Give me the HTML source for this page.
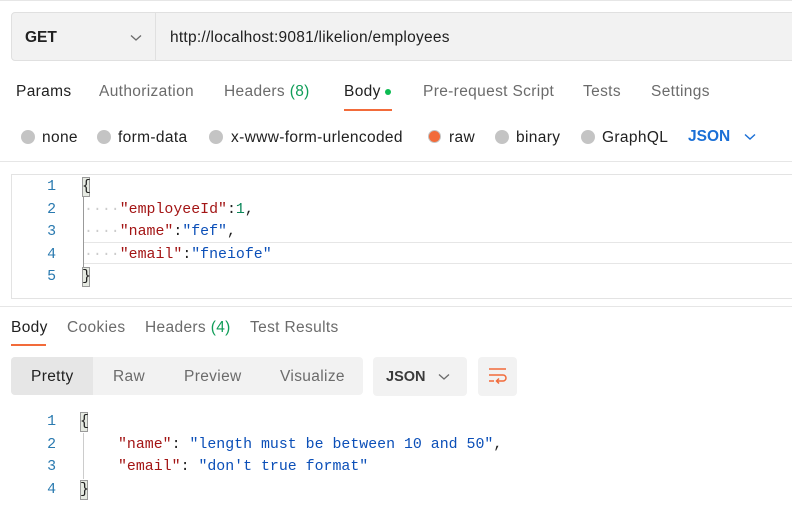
<!DOCTYPE html>
<html><head><style>
body{margin:0;width:792px;height:520px;background:#fff;position:relative;overflow:hidden;font-family:"Liberation Sans",sans-serif;color:#212121}
.a{position:absolute;white-space:nowrap}
.t{font-size:15.5px;letter-spacing:.35px;color:#6b6b6b}
.m{font-family:"Liberation Mono",monospace;font-size:14.9px}
.ln{color:#2a7ab0;width:20px;text-align:right}
.k{color:#a31515}.s{color:#0b4fb8}.n{color:#098658}
.r{width:14px;height:14px;border-radius:50%;background:#c4c4c4}
.br{width:8px;height:20px;background:#e6eae2;border:1px solid #9a9a9a;box-sizing:border-box}
</style></head><body>
<div class="a" style="left:0;top:0;width:792px;height:1px;background:#e6e6e6"></div>
<div class="a" style="left:11px;top:12px;width:790px;height:49px;background:#f2f2f2;border:1px solid #e0e0e0;border-radius:4px;box-sizing:border-box"></div>
<div class="a" style="left:155px;top:13px;width:1px;height:47px;background:#e0e0e0"></div>
<div class="a" style="left:25px;top:29px;font-size:15.5px;font-weight:bold;color:#212121">GET</div>
<svg class="a" style="left:130px;top:34px" width="12" height="8"><path d="M1 1.5l5 4.5 5-4.5" fill="none" stroke="#6b6b6b" stroke-width="1.3"/></svg>
<div class="a" style="left:170px;top:29px;font-size:15.5px;letter-spacing:.25px;color:#212121">http://localhost:9081/likelion/employees</div>

<div class="a t" style="left:16px;top:83px;color:#212121">Params</div>
<div class="a t" style="left:99px;top:83px">Authorization</div>
<div class="a t" style="left:224px;top:83px">Headers <span style="color:#0f9d58">(8)</span></div>
<div class="a t" style="left:344px;top:83px;color:#212121">Body</div>
<div class="a" style="left:385px;top:89px;width:6px;height:6px;border-radius:50%;background:#0cbb52"></div>
<div class="a" style="left:344px;top:109px;width:48px;height:2px;background:#f26b3a"></div>
<div class="a t" style="left:423px;top:83px">Pre-request Script</div>
<div class="a t" style="left:583px;top:83px">Tests</div>
<div class="a t" style="left:651px;top:83px">Settings</div>

<div class="a r" style="left:21px;top:130px"></div><div class="a t" style="left:42px;top:129px;color:#212121">none</div>
<div class="a r" style="left:97px;top:130px"></div><div class="a t" style="left:118px;top:129px;color:#212121">form-data</div>
<div class="a r" style="left:209px;top:130px"></div><div class="a t" style="left:231px;top:129px;color:#212121">x-www-form-urlencoded</div>
<div class="a r" style="left:428px;top:130px;background:#f26b3a;border:1.5px solid #c4c4c4;width:11px;height:11px"></div><div class="a t" style="left:449px;top:129px;color:#212121">raw</div>
<div class="a r" style="left:495px;top:130px"></div><div class="a t" style="left:516px;top:129px;color:#212121">binary</div>
<div class="a r" style="left:581px;top:130px"></div><div class="a t" style="left:602px;top:129px;color:#212121">GraphQL</div>
<div class="a" style="left:688px;top:128px;font-size:15.5px;font-weight:bold;color:#1a6fd6">JSON</div>
<svg class="a" style="left:744px;top:133px" width="12" height="8"><path d="M1 1.5l5 4.5 5-4.5" fill="none" stroke="#1a6fd6" stroke-width="1.4"/></svg>

<div class="a" style="left:0;top:161px;width:792px;height:1px;background:#e6e6e6"></div>
<div class="a" style="left:11px;top:174px;width:790px;height:125px;border:1px solid #e3e3e3;box-sizing:border-box"></div>
<div class="a" style="left:83px;top:197px;width:1px;height:70px;background:#9a9a9a"></div>
<div class="a" style="left:84px;top:242px;width:708px;height:22px;border-top:1px solid #e6e6e6;border-bottom:1px solid #e6e6e6;box-sizing:border-box"></div>
<div class="a m ln" style="left:36px;top:179px">1</div>
<div class="a m ln" style="left:36px;top:202px">2</div>
<div class="a m ln" style="left:36px;top:224px">3</div>
<div class="a m ln" style="left:36px;top:247px">4</div>
<div class="a m ln" style="left:36px;top:269px">5</div>
<div class="a br" style="left:82px;top:177px"></div><div class="a m" style="left:82px;top:179px">{</div>
<div class="a m" style="left:84px;top:202px"><span style="color:#ccc">····</span><span class="k">"employeeId"</span>:<span class="n">1</span>,</div>
<div class="a m" style="left:84px;top:224px"><span style="color:#ccc">····</span><span class="k">"name"</span>:<span class="s">"fef"</span>,</div>
<div class="a m" style="left:84px;top:247px"><span style="color:#ccc">····</span><span class="k">"email"</span>:<span class="s">"fneiofe"</span></div>
<div class="a br" style="left:82px;top:267px"></div><div class="a m" style="left:82px;top:269px">}</div>
<div class="a" style="left:0;top:306px;width:792px;height:1px;background:#e6e6e6"></div>

<div class="a t" style="left:11px;top:319px;color:#212121">Body</div>
<div class="a" style="left:11px;top:344px;width:35px;height:2px;background:#f26b3a"></div>
<div class="a t" style="left:67px;top:319px">Cookies</div>
<div class="a t" style="left:145px;top:319px">Headers <span style="color:#0f9d58">(4)</span></div>
<div class="a t" style="left:250px;top:319px">Test Results</div>

<div class="a" style="left:11px;top:357px;width:352px;height:38px;background:#f2f2f2;border-radius:4px"></div>
<div class="a" style="left:11px;top:357px;width:82px;height:38px;background:#e6e6e6;border-radius:4px 0 0 4px"></div>
<div class="a t" style="left:31px;top:368px;color:#212121">Pretty</div>
<div class="a t" style="left:113px;top:368px">Raw</div>
<div class="a t" style="left:184px;top:368px">Preview</div>
<div class="a t" style="left:280px;top:368px">Visualize</div>
<div class="a" style="left:373px;top:357px;width:94px;height:39px;background:#f2f2f2;border-radius:4px"></div>
<div class="a" style="left:386px;top:369px;font-size:14.5px;font-weight:bold;color:#3a3a3a">JSON</div>
<svg class="a" style="left:438px;top:373px" width="12" height="8"><path d="M1 1.5l5 4.5 5-4.5" fill="none" stroke="#6b6b6b" stroke-width="1.3"/></svg>
<div class="a" style="left:478px;top:357px;width:39px;height:39px;background:#f2f2f2;border-radius:4px"></div>
<svg class="a" style="left:487px;top:367px" width="22" height="18"><path d="M2 2h17M2 8h14a3 3 0 010 6h-6M12 11.5l-2.5 2.5 2.5 2.5M2 14h5" fill="none" stroke="#f26b3a" stroke-width="1.5"/></svg>

<div class="a" style="left:83px;top:433px;width:1px;height:46px;background:#ccc"></div>
<div class="a m ln" style="left:36px;top:414px">1</div>
<div class="a m ln" style="left:36px;top:437px">2</div>
<div class="a m ln" style="left:36px;top:459px">3</div>
<div class="a m ln" style="left:36px;top:482px">4</div>
<div class="a br" style="left:80px;top:412px"></div><div class="a m" style="left:80px;top:414px">{</div>
<div class="a m" style="left:118px;top:437px"><span class="k">"name"</span>: <span class="s">"length must be between 10 and 50"</span>,</div>
<div class="a m" style="left:118px;top:459px"><span class="k">"email"</span>: <span class="s">"don't true format"</span></div>
<div class="a br" style="left:80px;top:480px"></div><div class="a m" style="left:80px;top:482px">}</div>
</body></html>
